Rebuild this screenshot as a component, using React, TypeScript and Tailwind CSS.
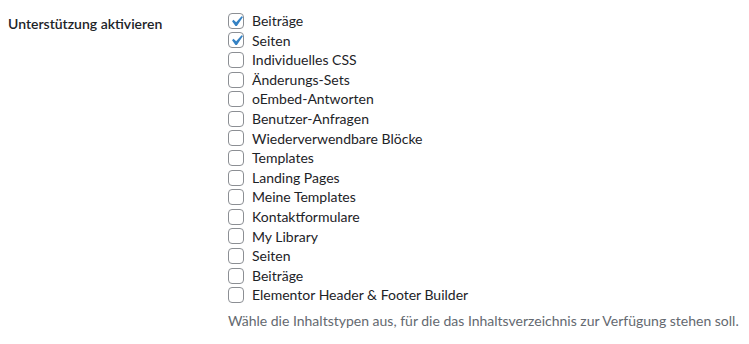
import React from "react";

const items: [string, boolean][] = [
  ["Beiträge", true],
  ["Seiten", true],
  ["Individuelles CSS", false],
  ["Änderungs-Sets", false],
  ["oEmbed-Antworten", false],
  ["Benutzer-Anfragen", false],
  ["Wiederverwendbare Blöcke", false],
  ["Templates", false],
  ["Landing Pages", false],
  ["Meine Templates", false],
  ["Kontaktformulare", false],
  ["My Library", false],
  ["Seiten", false],
  ["Beiträge", false],
  ["Elementor Header & Footer Builder", false],
];

function Box({ checked }: { checked: boolean }) {
  return (
    <span className="relative mr-[8px] inline-flex h-[16px] w-[16px] shrink-0 items-center justify-center rounded-[4px] border border-[#8c8f94] bg-white">
      {checked && (
        <svg viewBox="0 0 20 20" className="absolute left-[-3px] top-[-3px] h-[21px] w-[21px]">
          <path d="M14.83 4.89l1.34.94-5.81 8.38H9.02L5.78 9.67l1.34-1.25 2.57 2.4z" fill="#3582c4" />
        </svg>
      )}
    </span>
  );
}

export default function App() {
  return (
    <div className="min-h-[344px] w-[749px] bg-white px-[8px] text-[14px] text-[#1d2327]" style={{ fontFamily: '"Lato", sans-serif' }}>
      <div className="flex">
        <div className="w-[210px] shrink-0 pr-[10px] pt-[15px] font-semibold leading-[1.3]">Unterstützung aktivieren</div>
        <div className="px-[10px] pt-[11px]">
          {items.map(([label, checked], i) => (
            <div key={i} className="flex h-[19.6px] items-center leading-[1.4]">
              <Box checked={checked} />
              <span>{label}</span>
            </div>
          ))}
          <p className="mt-[5px] whitespace-nowrap leading-[1.5] text-[#646970]">
            Wähle die Inhaltstypen aus, für die das Inhaltsverzeichnis zur Verfügung stehen soll.
          </p>
        </div>
      </div>
    </div>
  );
}
